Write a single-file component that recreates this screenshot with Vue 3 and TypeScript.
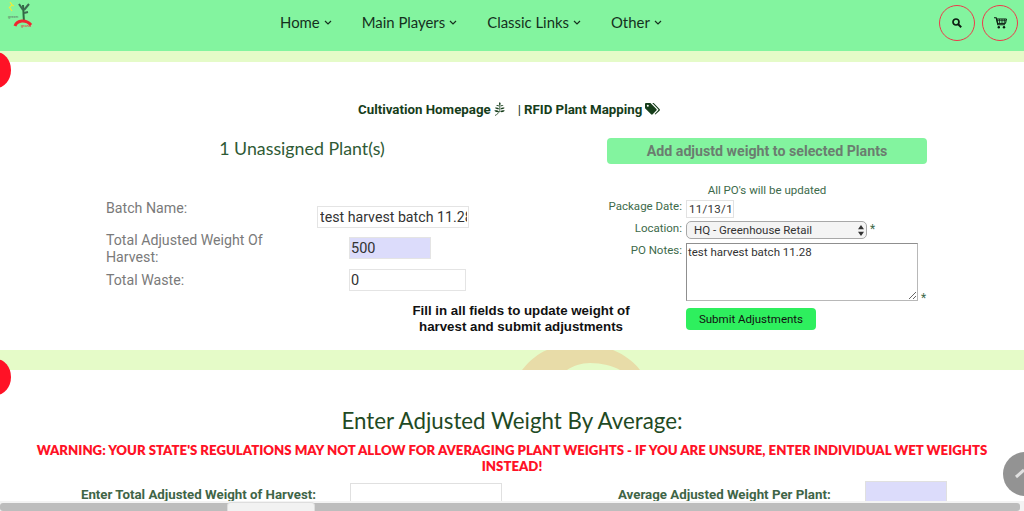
<script setup lang="ts">
const navItems = ["Home", "Main Players", "Classic Links", "Other"];
</script>

<template>
  <div class="page">
    <header class="topbar">
      <svg class="logo" viewBox="0 0 26 26" width="26" height="26">
        <path d="M3 0l2 3-3 3M5 3l2 1M3 6l2 3" fill="none" stroke="#ecec3c" stroke-width="1.2" />
        <path d="M16 3l1 17" stroke="#2f6a43" stroke-width="2" />
        <path d="M16 8l-4-6M17 8l5-6M17 11l4-1" stroke="#3d6a50" stroke-width="2" />
        <path d="M8 24c2-6 11-7 16-1" fill="none" stroke="#f0262f" stroke-width="3" />
        <text x="1" y="16" class="logo-text">green</text>
        <text x="14" y="25" class="logo-text red">grand</text>
      </svg>
      <nav class="nav">
        <a v-for="item in navItems" :key="item" class="nav-item">
          {{ item }}
          <svg width="8" height="5" viewBox="0 0 8 5"><path d="M1 1l3 3 3-3" fill="none" stroke="#16301f" stroke-width="1.2" /></svg>
        </a>
      </nav>
      <div class="top-icons">
        <span class="round-icon">
          <svg width="10" height="10" viewBox="0 0 10 10"><circle cx="4" cy="4" r="3" fill="none" stroke="#0d1a12" stroke-width="1.7" /><path d="M6.2 6.2L9.2 9.2" stroke="#0d1a12" stroke-width="2" /></svg>
        </span>
        <span class="round-icon">
          <svg width="13" height="12" viewBox="0 0 13 12">
            <path d="M0 .8h2.2l1.6 7h7.2" fill="none" stroke="#0d1a12" stroke-width="1.1" />
            <path d="M2.8 2h9.700l-1 4.400H3.600z" fill="none" stroke="#0d1a12" stroke-width="1" />
            <path d="M3 3.600h9M5.500 2v4.400M8 2v4.400M10.400 2v4.400" stroke="#0d1a12" stroke-width=".7" />
            <circle cx="4.800" cy="10.200" r="1.200" fill="#0d1a12" /><circle cx="10" cy="10.200" r="1.200" fill="#0d1a12" />
          </svg>
        </span>
      </div>
    </header>

    <div class="band band-top"><span class="red-dot"></span></div>

    <section class="panel">
      <div class="links">
        <a class="link">Cultivation Homepage</a>
        <svg class="leaf" width="11" height="14" viewBox="0 0 11 14">
          <path d="M1 13.500C3 12.500 5 11 5.800 8.500V1" fill="none" stroke="#163d1a" stroke-width=".8" />
          <path d="M5.800 0C4.900 1 4.900 2.200 5.800 3.200 6.700 2.200 6.700 1 5.800 0zM5.400 4C4.400 2.900 3.200 2.700 2 3.100 2.900 4.200 4.100 4.500 5.400 4zM6.200 4C7.200 2.900 8.400 2.700 9.600 3.100 8.700 4.200 7.500 4.500 6.200 4zM5.400 6.900C4 5.600 2.500 5.300 1 5.800 2 7.200 3.600 7.600 5.400 6.900zM6.200 6.900C7.600 5.600 9.100 5.300 10.600 5.800 9.600 7.200 8 7.600 6.200 6.900zM5.200 9.800C3.800 8.400 2 8 .3 8.600 1.400 10.100 3.200 10.500 5.200 9.800zM6 9.800C7.400 8.400 9.100 8 10.800 8.600 9.700 10.100 8 10.500 6 9.800z" fill="#163d1a" />
        </svg>
        <span class="pipe">|</span>
        <a class="link">RFID Plant Mapping</a>
        <svg width="15" height="12" viewBox="0 0 15 12">
          <path d="M0 1.200C0 .5.500 0 1.200 0h4.200l6 6c.5.500.5 1.100 0 1.600l-3.700 3.700c-.5.500-1.100.5-1.600 0L0 5.300z" fill="#163d1a" />
          <path d="M7.200 0h1.500l5.800 5.900c.6.600.6 1.200 0 1.800L10.400 11.600 9.700 11 13 7.500c.5-.5.5-.9 0-1.400z" fill="#163d1a" />
          <circle cx="2.800" cy="2.800" r="1" fill="#fff" />
        </svg>
      </div>

      <div class="columns">
        <div class="left-col">
          <h2 class="plants">1 Unassigned Plant(s)</h2>
          <div class="left-form">
            <div class="row row-name">
              <label>Batch Name:</label>
              <input class="field field-name" value="test harvest batch 11.28" />
            </div>
            <div class="row row-weight">
              <label>Total Adjusted Weight Of Harvest:</label>
              <input class="field field-weight" value="500" readonly />
            </div>
            <div class="row row-waste">
              <label>Total Waste:</label>
              <input class="field field-waste" value="0" />
            </div>
          </div>
        </div>

        <div class="right-col">
          <button class="add-btn" type="button">Add adjustd weight to selected Plants</button>
          <p class="po-note">All PO's will be updated</p>
          <div class="po-form">
            <label class="lbl-date">Package Date:</label>
            <div><input class="date-field" value="11/13/19" /></div>
            <label class="lbl-location">Location:</label>
            <div class="with-star">
              <span class="select">HQ - Greenhouse Retail
                <svg width="6" height="11" viewBox="0 0 6 11"><path d="M3 0l3 4.200H0zM3 11L0 6.800h6z" fill="#333" /></svg>
              </span>
              <span class="star">*</span>
            </div>
            <label class="lbl-notes">PO Notes:</label>
            <div class="with-star notes-wrap">
              <textarea class="notes">test harvest batch 11.28</textarea>
              <span class="star">*</span>
            </div>
          </div>
        </div>
      </div>

      <div class="submit-row">
        <p class="fill-note">Fill in all fields to update weight of harvest and submit adjustments</p>
        <button class="submit-btn" type="button">Submit Adjustments</button>
      </div>
    </section>

    <div class="band band-mid">
      <span class="red-dot"></span>
      <svg class="arc" width="120" height="20" viewBox="0 0 120 20">
        <path d="M0 20C8 10 17 3 25 0H91C103 5 112 12 118 20H98C91 16 80 13 68 13 59 13 51 16 45 20z" fill="#e8dca8" />
      </svg>
    </div>

    <section class="average">
      <h2 class="avg-title">Enter Adjusted Weight By Average:</h2>
      <p class="warning">WARNING: YOUR STATE'S REGULATIONS MAY NOT ALLOW FOR AVERAGING PLANT WEIGHTS - IF YOU ARE UNSURE, ENTER INDIVIDUAL WET WEIGHTS INSTEAD!</p>
      <div class="avg-row">
        <label class="avg-label avg-label-a">Enter Total Adjusted Weight of Harvest:</label>
        <input class="avg-input" />
        <label class="avg-label avg-label-b">Average Adjusted Weight Per Plant:</label>
        <input class="avg-input avg-readonly" readonly />
      </div>
    </section>

    <span class="to-top">
      <svg width="21" height="44" viewBox="0 0 21 44"><path d="M13 25l8-7" fill="none" stroke="#e0e0e0" stroke-width="3" /></svg>
    </span>

    <div class="scrollbar"><span class="scroll-tab"></span></div>
  </div>
</template>

<style scoped>
.page {
  position: relative;
  width: 1024px;
  height: 511px;
  overflow: hidden;
  background: #fff;
  font-family: Roboto, "Liberation Sans", sans-serif;
}

.topbar {
  height: 51px;
  background: #83f49f;
  display: flex;
  position: relative;
}

.logo {
  margin: 2px 0 0 7px;
}

.logo-text {
  font-family: "Liberation Sans", sans-serif;
  font-size: 4px;
  fill: #5a6f5e;
}

.logo-text.red {
  fill: #e8262f;
}

.nav {
  display: flex;
  gap: 30px;
  margin-left: 247px;
  height: 44px;
  align-items: center;
}

.nav-item {
  font-family: Lato, sans-serif;
  font-size: 14.900px;
  color: #14301d;
  display: flex;
  align-items: center;
  gap: 4px;
}

.top-icons {
  display: flex;
  gap: 7px;
  position: absolute;
  left: 939px;
  top: 5px;
}

.round-icon {
  width: 36px;
  height: 36px;
  box-sizing: border-box;
  border: 1px solid #ee3a4a;
  border-radius: 50%;
  display: flex;
  align-items: center;
  justify-content: center;
}

.band {
  background: #e5fbc8;
  position: relative;
}

.band-top {
  height: 11px;
}

.band-mid {
  height: 20px;
}

.red-dot {
  position: absolute;
  left: -19px;
  top: 1px;
  width: 30px;
  height: 36px;
  border-radius: 50%;
  background: #ff1226;
  z-index: 2;
}

.band-mid .red-dot {
  top: 9px;
}

.arc {
  position: absolute;
  left: 522px;
  top: 0;
}

.panel {
  height: 288px;
  padding-top: 39px;
  box-sizing: border-box;
}

.links {
  display: flex;
  align-items: center;
  height: 16px;
  padding-left: 358px;
  color: #163d1a;
  font-size: 13.300px;
  font-weight: 700;
}

.leaf {
  margin-left: 3px;
}

.pipe {
  margin: 0 3px 0 13px;
  font-weight: 400;
}

.link + svg {
  margin-left: 3px;
}

.columns {
  display: flex;
  margin-top: 21px;
}

.left-col {
  width: 607px;
}

.plants {
  margin: -1px 0 0;
  width: 604px;
  text-align: center;
  font-family: Lato, sans-serif;
  font-size: 17.800px;
  font-weight: 400;
  line-height: 22px;
  color: #2f5a35;
}

.left-form {
  margin: 41px 0 0 106px;
}

.row {
  display: flex;
  color: #7a7a7a;
  font-size: 14.200px;
  line-height: 17px;
}

.row label {
  width: 211px;
}

.row-name {
  height: 32px;
}

.row-weight {
  height: 32px;
  margin-top: -1px;
}

.row-weight label {
  width: 243px;
  padding: 1px 70px 0 0;
  box-sizing: border-box;
}

.row-waste {
  margin-top: 6px;
}

.row-waste label {
  width: 243px;
  padding-top: 3px;
}

.field {
  box-sizing: border-box;
  height: 22px;
  border: 1px solid #e4e4e4;
  background: #fff;
  background-clip: padding-box;
  padding: 0 1px;
  font-family: Roboto, sans-serif;
  font-size: 14.500px;
  color: #333;
  outline: none;
}

.field-name {
  width: 152px;
  margin-top: 6px;
  font-size: 14.200px;
  padding-left: 2px;
}

.field-weight {
  width: 82px;
  background-color: #dcdcfb;
  margin-top: 6px;
}

.field-waste {
  width: 117px;
}

.right-col {
  width: 345px;
}

.add-btn {
  display: block;
  width: 320px;
  height: 26px;
  border: none;
  border-radius: 4px;
  background: #83f49f;
  color: #6b7d70;
  font-family: Roboto, sans-serif;
  font-size: 14.200px;
  font-weight: 700;
  padding: 0;
}

.po-note {
  margin: 19px 0 0;
  width: 320px;
  text-align: center;
  font-size: 11.500px;
  line-height: 14px;
  color: #3d6a4a;
}

.po-form {
  display: grid;
  grid-template-columns: 75px auto;
  column-gap: 4px;
  margin: 3px 0 0 0;
  font-size: 11.500px;
  color: #3d6a4a;
}

.po-form label {
  text-align: right;
  white-space: nowrap;
  line-height: 14px;
}

.lbl-date {
  margin-top: -1px;
}

.lbl-location {
  margin-top: 3px;
}

.lbl-notes {
  margin-top: 4px;
}

.date-field {
  display: block;
  box-sizing: border-box;
  width: 48px;
  height: 18px;
  border: 1px solid #e2e2e2;
  padding: 0 2px;
  font-family: Roboto, sans-serif;
  font-size: 11.500px;
  letter-spacing: .3px;
  color: #333;
  outline: none;
}

.with-star {
  display: flex;
  align-items: flex-start;
  gap: 3px;
  margin-top: 3px;
}

.select {
  box-sizing: border-box;
  width: 181px;
  height: 18px;
  border: 1px solid #a8a8a8;
  border-radius: 5px;
  background: #f4f4f4;
  display: flex;
  align-items: center;
  justify-content: space-between;
  padding: 0 2px 0 7px;
  font-size: 11.500px;
  color: #333;
}

.star {
  font-size: 12px;
  line-height: 16px;
  color: #3d6a4a;
}

.notes-wrap {
  margin-top: 4px;
  align-items: flex-end;
}

.notes-wrap .star {
  margin-bottom: -5px;
}

.notes {
  display: block;
  box-sizing: border-box;
  width: 232px;
  height: 58px;
  border: 1px solid #8f8f8f;
  border-bottom-color: #b8b8b8;
  border-right-color: #b8b8b8;
  padding: 1px;
  font-family: Roboto, sans-serif;
  font-size: 11.500px;
  line-height: 15px;
  color: #333;
  outline: none;
}

.submit-row {
  display: flex;
  margin-top: 7px;
}

.fill-note {
  margin: -5px 0 0 409px;
  width: 224px;
  text-align: center;
  font-family: "Liberation Sans", sans-serif;
  font-size: 13.300px;
  font-weight: 700;
  line-height: 16px;
  color: #111;
}

.submit-btn {
  margin-left: 53px;
  width: 130px;
  height: 22px;
  border: none;
  border-radius: 4px;
  background: #2eef5e;
  color: #111;
  font-family: Roboto, sans-serif;
  font-size: 11.500px;
  padding: 0;
}

.average {
  text-align: center;
  padding-top: 38px;
}

.avg-title {
  margin: 0;
  font-family: Lato, sans-serif;
  font-size: 22.300px;
  font-weight: 400;
  line-height: 26px;
  color: #1f4a24;
}

.warning {
  margin: 8px auto 0;
  width: 980px;
  font-family: Lato, sans-serif;
  font-size: 13.200px;
  font-weight: 800;
  line-height: 16px;
  color: #ff1226;
}

.avg-row {
  display: flex;
  align-items: flex-start;
  margin-top: 9px;
  height: 40px;
}

.avg-label {
  font-size: 13.300px;
  font-weight: 700;
  color: #3f6547;
  text-align: right;
  white-space: nowrap;
  line-height: 16px;
  margin-top: 4px;
}

.avg-label-a {
  width: 316px;
}

.avg-label-b {
  margin-left: 116px;
  width: 212px;
}

.avg-input {
  box-sizing: border-box;
  width: 152px;
  height: 30px;
  margin-left: 34px;
  border: 1px solid #e0e0e0;
  outline: none;
}

.avg-input.avg-readonly {
  width: 82px;
  margin-left: 35px;
  margin-top: -2px;
  background: #dcdcfb;
}

.to-top {
  position: absolute;
  left: 1003px;
  top: 452px;
  width: 44px;
  height: 44px;
  border-radius: 50%;
  background: #939393;
}

.to-top svg {
  display: block;
}

.scrollbar {
  position: absolute;
  left: 0;
  right: 0;
  bottom: 0;
  height: 10px;
  background: #f3f3f3;
}

.scrollbar::after {
  content: "";
  position: absolute;
  left: 0;
  right: 4px;
  top: 2px;
  height: 8px;
  border-radius: 3px;
  background: #bdbdbd;
}

.scroll-tab {
  position: absolute;
  left: 227px;
  top: 1px;
  width: 88px;
  height: 9px;
  z-index: 1;
  background: #f2f2f2;
  border: 1px solid #dedede;
  border-bottom: none;
  border-radius: 4px 4px 0 0;
  box-sizing: border-box;
}
</style>
